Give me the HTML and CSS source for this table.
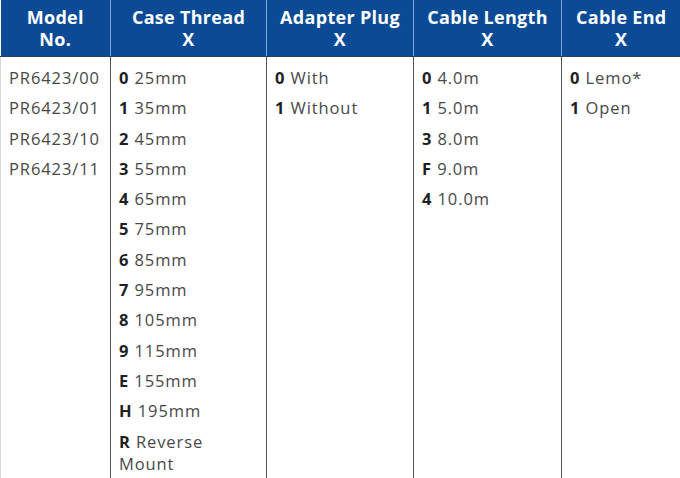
FILE: index.html
```html
<!DOCTYPE html>
<html>
<head>
<meta charset="utf-8">
<link rel="stylesheet" href="styles.css">
</head>
<body>
<table class="spec">
  <colgroup>
    <col class="c1"><col class="c2"><col class="c3"><col class="c4"><col class="c5">
  </colgroup>
  <thead>
    <tr>
      <th>Model<br>No.</th>
      <th>Case Thread<br>X</th>
      <th>Adapter Plug<br>X</th>
      <th>Cable Length<br>X</th>
      <th>Cable End<br>X</th>
    </tr>
  </thead>
  <tbody>
    <tr>
      <td>
        <p>PR6423/00</p>
        <p>PR6423/01</p>
        <p>PR6423/10</p>
        <p>PR6423/11</p>
      </td>
      <td>
        <p><b>0</b> 25mm</p>
        <p><b>1</b> 35mm</p>
        <p><b>2</b> 45mm</p>
        <p><b>3</b> 55mm</p>
        <p><b>4</b> 65mm</p>
        <p><b>5</b> 75mm</p>
        <p><b>6</b> 85mm</p>
        <p><b>7</b> 95mm</p>
        <p><b>8</b> 105mm</p>
        <p><b>9</b> 115mm</p>
        <p><b>E</b> 155mm</p>
        <p><b>H</b> 195mm</p>
        <p><b>R</b> Reverse Mount</p>
      </td>
      <td>
        <p><b>0</b> With</p>
        <p><b>1</b> Without</p>
      </td>
      <td>
        <p><b>0</b> 4.0m</p>
        <p><b>1</b> 5.0m</p>
        <p><b>3</b> 8.0m</p>
        <p><b>F</b> 9.0m</p>
        <p><b>4</b> 10.0m</p>
      </td>
      <td>
        <p><b>0</b> Lemo*</p>
        <p><b>1</b> Open</p>
      </td>
    </tr>
  </tbody>
</table>
</body>
</html>
```

FILE: styles.css
```css
html, body {
  margin: 0;
  padding: 0;
  background: #fff;
  overflow: hidden;
}
.spec {
  border-collapse: collapse;
  table-layout: fixed;
  width: 680px;
  font-family: "Open Sans", sans-serif;
}
.c1 { width: 110px; }
.c2 { width: 156px; }
.c3 { width: 147px; }
.c4 { width: 148px; }
.c5 { width: 119px; }
.spec th {
  background: #0b4a95;
  color: #fff;
  font-weight: 700;
  font-size: 18px;
  letter-spacing: 0.3px;
  line-height: 22px;
  padding: 6px 0;
  text-align: center;
  white-space: nowrap;
  border-left: 1px solid #7ea6d6;
  border-bottom: 1px solid #2b3f5a;
  vertical-align: middle;
  height: 44px;
}
.spec th:first-child { border-left: none; }
.spec td {
  vertical-align: top;
  padding: 10px 8px 0 8px;
  border-left: 1px solid #555;
  color: #484848;
  font-size: 16.5px;
  letter-spacing: 0.9px;
  line-height: 22.3px;
  height: 420px;
}
.spec td:first-child { border-left: 1px solid #d8d8d8; }
.spec p {
  margin: 0 0 8px 0;
}
.spec b {
  color: #1f1f1f;
  font-weight: 700;
}
```
